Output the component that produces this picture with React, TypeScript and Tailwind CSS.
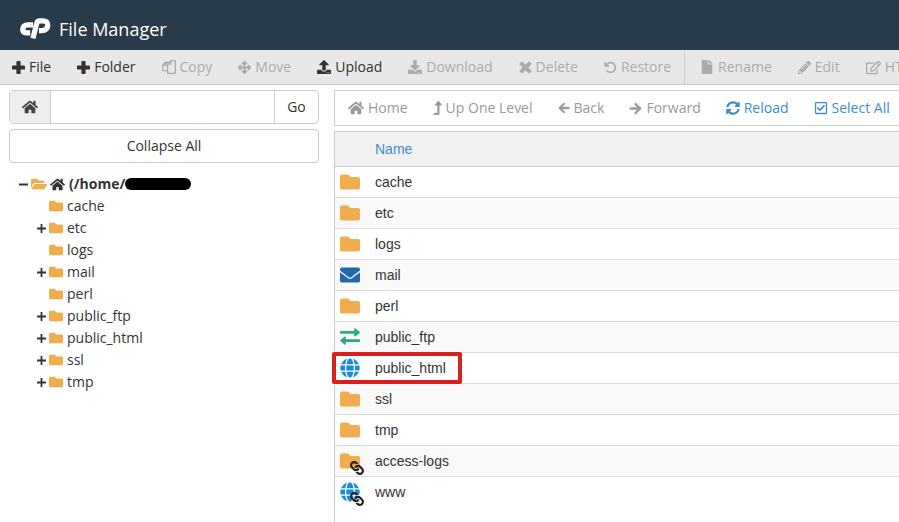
import type { ReactNode } from "react";
import {
  FaArrowLeft,
  FaArrowRight,
  FaArrowsAlt,
  FaDownload,
  FaEnvelope,
  FaFile,
  FaFolder,
  FaFolderOpen,
  FaGlobe,
  FaHome,
  FaLevelUpAlt,
  FaLink,
  FaPencilAlt,
  FaRegCheckSquare,
  FaRegEdit,
  FaSyncAlt,
  FaUpload,
} from "react-icons/fa";
import { FaArrowRotateLeft } from "react-icons/fa6";

type Action = {
  label: string;
  icon: ReactNode;
  active?: boolean;
  divider?: boolean;
};

const Logo = () => (
  <svg
    width="31"
    height="22"
    viewBox="0 0 31 22"
    fill="none"
    stroke="#fff"
    strokeWidth="5.2"
    strokeLinejoin="round"
  >
    <path d="M13.2 6.8H8C4.6 6.8 2.7 8.7 2.7 11.2S4.4 14.9 7.2 14.9H10.2" />
    <path d="M12.9 20.4L16.9 4.8Q17.4 2.8 19.4 2.8H22.8C26.2 2.8 28 4.5 27.8 7.3C27.6 10.4 25.6 12.7 22 12.7H19" />
  </svg>
);

const PlusIcon = () => (
  <svg width="13" height="13" viewBox="0 0 13 13" fill="currentColor">
    <path d="M5.3 0H7.7Q8.6 0 8.6 0.9V4.4H12.1Q13 4.4 13 5.3V7.7Q13 8.6 12.1 8.6H8.6V12.1Q8.6 13 7.7 13H5.3Q4.4 13 4.4 12.1V8.6H0.9Q0 8.6 0 7.7V5.3Q0 4.4 0.9 4.4H4.4V0.9Q4.4 0 5.3 0Z" />
  </svg>
);

const CopyIcon = () => (
  <svg
    width="14"
    height="14"
    viewBox="0 0 14 14"
    fill="none"
    stroke="currentColor"
    strokeWidth="1.3"
    strokeLinejoin="round"
  >
    <path d="M5.6 10.6H0.7V5.2L3.6 2.3H6.6" />
    <path d="M3.9 2.3V5.4H0.9" />
    <path d="M8.9 0.7H13.3V13.3H5.6V4L8.9 0.7ZM9 0.8V4.1H5.8" />
  </svg>
);

const CrossIcon = () => (
  <svg
    width="13"
    height="13"
    viewBox="0 0 13 13"
    stroke="currentColor"
    strokeWidth="4"
  >
    <path d="M1.6 1.6L11.4 11.4M11.4 1.6L1.6 11.4" />
  </svg>
);

const TransferIcon = () => (
  <svg width="20" height="17" viewBox="0 0 20 17" fill="#2fa886">
    <path d="M0.8 3H14.2V1Q14.2 -0.3 15.4 0.5L19.6 3.8Q20.2 4.4 19.6 5L15.4 8.2Q14.2 9 14.2 7.7V5.8H0.8Q0 5.8 0 5V3.8Q0 3 0.8 3Z" />
    <path d="M19.2 11.2H5.8V9.2Q5.8 8 4.6 8.8L0.4 12Q-0.2 12.6 0.4 13.2L4.6 16.4Q5.8 17.2 5.8 15.9V14H19.2Q20 14 20 13.2V12Q20 11.2 19.2 11.2Z" />
  </svg>
);

const fileActions: Action[] = [
  { label: "File", icon: <PlusIcon />, active: true },
  { label: "Folder", icon: <PlusIcon />, active: true },
  { label: "Copy", icon: <CopyIcon /> },
  { label: "Move", icon: <FaArrowsAlt size={13} stroke="currentColor" strokeWidth={20} /> },
  { label: "Upload", icon: <FaUpload size={14} />, active: true },
  { label: "Download", icon: <FaDownload size={14} /> },
  { label: "Delete", icon: <CrossIcon /> },
  { label: "Restore", icon: <FaArrowRotateLeft size={13} /> },
  { label: "Rename", icon: <FaFile size={14} />, divider: true },
  { label: "Edit", icon: <FaPencilAlt size={13} /> },
  { label: "HTML Editor", icon: <FaRegEdit size={15} /> },
];

const navActions: Action[] = [
  { label: "Home", icon: <FaHome size={16} /> },
  { label: "Up One Level", icon: <FaLevelUpAlt size={14} className="w-[9px]" /> },
  { label: "Back", icon: <FaArrowLeft size={12} stroke="currentColor" strokeWidth={20} /> },
  { label: "Forward", icon: <FaArrowRight size={13} stroke="currentColor" strokeWidth={20} /> },
  { label: "Reload", icon: <FaSyncAlt size={14} />, active: true },
  { label: "Select All", icon: <FaRegCheckSquare size={14} />, active: true },
];

const tree = [
  { name: "cache", open: false },
  { name: "etc", open: true },
  { name: "logs", open: false },
  { name: "mail", open: true },
  { name: "perl", open: false },
  { name: "public_ftp", open: true },
  { name: "public_html", open: true },
  { name: "ssl", open: true },
  { name: "tmp", open: true },
];

const Linked = ({ children }: { children: ReactNode }) => (
  <span className="relative block">
    {children}
    <FaLink
      size={14}
      className="absolute -right-1 -bottom-1 rotate-90 text-[#222]"
    />
  </span>
);

const folder = <FaFolder size={20} className="text-[#f0ad4e]" />;
const globe = <FaGlobe size={20} className="text-[#1b8dd6]" />;

const files = [
  { name: "cache", icon: folder },
  { name: "etc", icon: folder },
  { name: "logs", icon: folder },
  { name: "mail", icon: <FaEnvelope size={20} className="text-[#2168b0]" /> },
  { name: "perl", icon: folder },
  { name: "public_ftp", icon: <TransferIcon /> },
  { name: "public_html", icon: globe, marked: true },
  { name: "ssl", icon: folder },
  { name: "tmp", icon: folder },
  { name: "access-logs", icon: <Linked>{folder}</Linked> },
  { name: "www", icon: <Linked>{globe}</Linked> },
];

const Header = () => (
  <header className="flex h-[50px] items-center gap-2 bg-[#293a4a] px-5 pt-2 text-lg text-white">
    <Logo />
    <h1>File Manager</h1>
  </header>
);

const Toolbar = () => (
  <nav className="flex h-[35px] overflow-hidden border-b border-[#ccc] bg-[#e8e8e8]">
    {fileActions.map((a) => (
      <button
        key={a.label}
        className={`flex shrink-0 items-center gap-1 pr-[13px] whitespace-nowrap first:pl-3 ${
          a.active ? "text-[#333]" : "text-[#aaa]"
        } ${a.divider ? "border-l border-[#ccc] pl-[15px]" : "pl-[13px]"}`}
      >
        {a.icon}
        {a.label}
      </button>
    ))}
  </nav>
);

const Sidebar = () => (
  <aside className="w-[310px] shrink-0">
    <form className="flex h-[34px] rounded-sm border border-[#ccc]">
      <button
        type="button"
        aria-label="Home"
        className="flex w-[41px] items-center justify-center border-r border-[#ccc] bg-[#eee] text-[#444]"
      >
        <FaHome size={16} />
      </button>
      <input aria-label="Path" className="min-w-0 flex-1 px-2 outline-none" />
      <button type="button" className="w-11 border-l border-[#ccc]">
        Go
      </button>
    </form>
    <button className="mt-[5px] h-[34px] w-full rounded-sm border border-[#ccc]">
      Collapse All
    </button>

    <div className="mt-[10px] pl-[10px]">
      <div className="flex h-[22px] items-center font-bold">
        <button aria-label="Collapse" className="mr-[3px]">
          <svg width="9" height="9" viewBox="0 0 9 9" stroke="#333" strokeWidth="2">
            <path d="M0 4.5H9" />
          </svg>
        </button>
        <FaFolderOpen size={16} className="mr-[3px] text-[#f0ad4e]" />
        <FaHome size={15} className="mr-1" />
        <span>(/home/</span>
        <span className="h-3 w-[66px] rounded-full bg-black" />
      </div>
      <ul>
        {tree.map((t) => (
          <li key={t.name} className="flex h-[22px] items-center pl-[18px]">
            <button aria-label="Expand" className="mr-[3px] w-[9px]">
              {t.open && (
                <svg width="9" height="9" viewBox="0 0 9 9" stroke="#333" strokeWidth="1.8">
                  <path d="M0 4.5H9M4.5 0V9" />
                </svg>
              )}
            </button>
            <FaFolder size={14} className="mr-1 text-[#f0ad4e]" />
            <a href="#">{t.name}</a>
          </li>
        ))}
      </ul>
    </div>
  </aside>
);

const FileList = () => (
  <section className="min-w-0 flex-1">
    <nav className="flex h-[36px] overflow-hidden border border-r-0 border-[#ccc]">
      {navActions.map((a) => (
        <button
          key={a.label}
          className={`flex shrink-0 items-center gap-1 pr-3 pl-[13px] whitespace-nowrap ${
            a.active ? "text-[#428bca]" : "text-[#999]"
          }`}
        >
          {a.icon}
          {a.label}
        </button>
      ))}
    </nav>

    <div className="mt-[5px] min-h-[391px] border-t border-l border-[#ccc] font-['Liberation_Sans',Arial,sans-serif]">
      <table className="w-full border-collapse text-left">
        <thead>
          <tr className="h-[34px] border-b border-[#ccc] bg-[#f1f1f1]">
            <th className="w-10" aria-label="Type" />
            <th className="font-normal text-[#428bca]">Name</th>
          </tr>
        </thead>
        <tbody>
          {files.map((f) => (
            <tr
              key={f.name}
              className="h-[31px] border-b border-[#ddd] last:border-b-0 even:bg-[#f9f9f9]"
            >
              <td className="relative w-10 pl-[5px]">
                <span className="flex w-5 justify-center">{f.icon}</span>
                {f.marked && (
                  <span className="pointer-events-none absolute -top-px -left-[3px] h-[32px] w-[130px] rounded-xs border-4 border-[#d9201f]" />
                )}
              </td>
              <td>{f.name}</td>
            </tr>
          ))}
        </tbody>
      </table>
    </div>
  </section>
);

const App = () => {
  return (
    <div className="min-h-screen overflow-hidden bg-white font-['Open_Sans',sans-serif] text-sm text-[#333]">
      <Header />
      <Toolbar />
      <main className="flex gap-[15px] pt-[5px] pl-[9px]">
        <Sidebar />
        <FileList />
      </main>
    </div>
  );
};

export default App;
